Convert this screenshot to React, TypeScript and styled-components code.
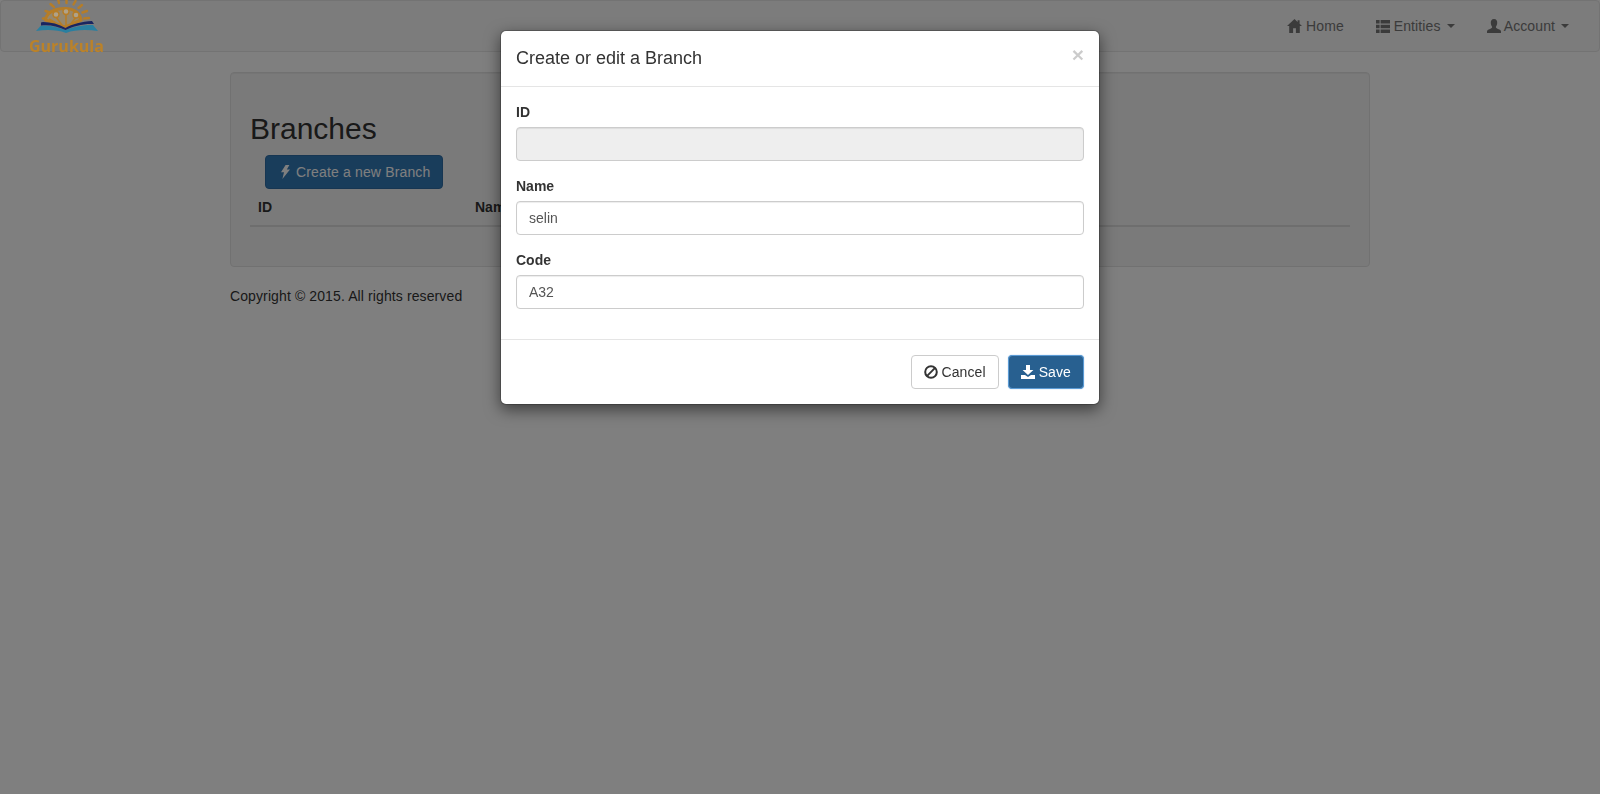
import React from "react";
import styled, { createGlobalStyle } from "styled-components";

const GlobalStyle = createGlobalStyle`
  html, body {
    margin: 0;
    padding: 0;
    height: 100%;
    background: #fff;
    font-family: "Liberation Sans", Arial, sans-serif;
    font-size: 14px;
    line-height: 20px;
    color: #333;
  }
  * { box-sizing: border-box; }
`;

const HomeIcon = () => (
  <svg width="15" height="14" viewBox="0 0 15 14" fill="currentColor">
    <path d="M7.5 0 L10.6 2.9 V1.2 H12.6 V4.7 L15 7 H12.8 V14 H8.9 V9.2 H6.1 V14 H2.2 V7 H0 Z" />
  </svg>
);

const ListIcon = () => (
  <svg width="14" height="13" viewBox="0 0 14 13" fill="currentColor">
    <path d="M0 0 H3.6 V3.6 H0 Z M4.6 0 H14 V3.6 H4.6 Z M0 4.7 H3.6 V8.3 H0 Z M4.6 4.7 H14 V8.3 H4.6 Z M0 9.4 H3.6 V13 H0 Z M4.6 9.4 H14 V13 H4.6 Z" />
  </svg>
);

const UserIcon = () => (
  <svg width="14" height="14" viewBox="0 0 14 14" fill="currentColor">
    <path d="M7 0 C9.4 0 10.4 1.8 10.2 4 C10.1 5.6 9.5 7 8.9 7.8 C8.7 8.9 9.6 9.4 11 9.9 C13 10.6 14 11.2 14 12.4 V14 H0 V12.4 C0 11.2 1 10.6 3 9.9 C4.4 9.4 5.3 8.9 5.1 7.8 C4.5 7 3.9 5.6 3.8 4 C3.6 1.8 4.6 0 7 0 Z" />
  </svg>
);

const BoltIcon = () => (
  <svg width="14" height="14" viewBox="0 0 14 14" fill="currentColor">
    <path d="M7.6 0 H11.4 L8.8 4.6 H12 L4.4 14 L6 7.2 H3 Z" />
  </svg>
);

const BanIcon = () => (
  <svg width="14" height="14" viewBox="0 0 14 14" fill="none" stroke="currentColor" strokeWidth="2">
    <circle cx="7" cy="7" r="5.8" />
    <path d="M2.9 11.1 L11.1 2.9" />
  </svg>
);

const DownloadIcon = () => (
  <svg width="14" height="14" viewBox="0 0 14 14" fill="currentColor">
    <path d="M5 0 H9 V5 H12.4 L7 10 L1.6 5 H5 Z M0 10 H4 L7 12 L10 10 H14 V14 H0 Z" />
  </svg>
);

const LogoMark = () => (
  <svg width="72" height="36" viewBox="0 0 72 36">
    <g stroke="#b57d28" strokeWidth="2.4" strokeLinecap="round">
      <path d="M29 -1 L30 3" />
      <path d="M37.5 -1 L37.5 3" />
      <path d="M46.5 1 L44.5 4.5" />
      <path d="M21.5 4 L25 7" />
      <path d="M53 5 L49.5 8" />
      <path d="M16.5 11 L21 12.5" />
      <path d="M58 11 L53.5 12.5" />
      <path d="M14 18.5 L19 18.5" />
      <path d="M60 18 L55 18.5" />
    </g>
    <path d="M16.5 20 C17 13 25 8.5 36 8.5 C46 8.5 51 14 52 20 L41 25 L36 27 L30 25 Z" fill="#96886e" stroke="#b57d28" strokeWidth="3" />
    <g stroke="#b57d28" strokeWidth="1.6" fill="none">
      <path d="M27 17 L33 25" />
      <path d="M37 14 L37 26" />
      <path d="M47 17 L41 25" />
      <path d="M20 19 L27 23" />
      <path d="M50 20 L44 23" />
    </g>
    <g fill="#b0a288" stroke="#b57d28" strokeWidth="1.4">
      <circle cx="27" cy="14.5" r="3" />
      <circle cx="37" cy="11.5" r="3" />
      <circle cx="47" cy="15" r="3" />
    </g>
    <path d="M7 31 L12 25.5 C20 25 29 27 36.5 30 C44 27 54 24.5 64 25 L69 31 C58 29.5 46 29.5 37 33 C28 29.5 17 29.5 7 31 Z" fill="#2a7fa0" />
    <path d="M12 22.5 L14 22 C22 22 30 24 36.5 28 C43 24 53 21.5 63 21 L65 24 C54 23.5 45 26 36.5 30 C28 26 20 24.5 12 25.5 Z" fill="#1a2560" />
  </svg>
);

export default function App() {
  return (
    <>
      <GlobalStyle />
      <Page>
        <Navbar>
          <Brand>
            <LogoMark />
            <BrandName>Gurukula</BrandName>
          </Brand>
          <NavList>
            <NavLink><HomeIcon /> Home</NavLink>
            <NavLink><ListIcon /> Entities <Caret /></NavLink>
            <NavLink><UserIcon /> Account <Caret /></NavLink>
          </NavList>
        </Navbar>
        <Container>
          <Well>
            <PageTitle>Branches</PageTitle>
            <CreateButton><BoltIcon /> Create a new Branch</CreateButton>
            <Table>
              <thead>
                <tr>
                  <HeadCell $width={217}>ID</HeadCell>
                  <HeadCell $width={300}>Name</HeadCell>
                  <HeadCell $width={300}>Code</HeadCell>
                  <HeadCell />
                </tr>
              </thead>
            </Table>
          </Well>
          <Footer>Copyright © 2015. All rights reserved</Footer>
        </Container>
      </Page>
      <Backdrop />
      <ModalWrap>
        <Modal>
          <ModalHeader>
            <ModalTitle>Create or edit a Branch</ModalTitle>
            <CloseButton>×</CloseButton>
          </ModalHeader>
          <ModalBody>
            <FormGroup>
              <Label>ID</Label>
              <Input disabled defaultValue="" />
            </FormGroup>
            <FormGroup>
              <Label>Name</Label>
              <Input defaultValue="selin" />
            </FormGroup>
            <FormGroup>
              <Label>Code</Label>
              <Input defaultValue="A32" />
            </FormGroup>
          </ModalBody>
          <ModalFooter>
            <CancelButton><BanIcon /> Cancel</CancelButton>
            <SaveButton><DownloadIcon /> Save</SaveButton>
          </ModalFooter>
        </Modal>
      </ModalWrap>
    </>
  );
}

const Page = styled.div`
  min-height: 794px;
`;

const Navbar = styled.nav`
  height: 52px;
  margin-bottom: 20px;
  display: flex;
  justify-content: space-between;
  background: #f8f8f8;
  border: 1px solid #e7e7e7;
  border-radius: 4px;
`;

const Brand = styled.a`
  position: relative;
  z-index: 1050;
  width: 76px;
  margin-left: 28px;
  margin-top: -1px;
  display: flex;
  flex-direction: column;
  align-items: flex-start;

  svg {
    flex-shrink: 0;
  }
`;

const BrandName = styled.span`
  flex-shrink: 0;
  font-family: "Open Sans", sans-serif;
  font-weight: 700;
  font-size: 16px;
  line-height: 19px;
  margin-top: 1px;
  color: #bb8229;
  white-space: nowrap;
`;

const NavList = styled.div`
  display: flex;
  gap: 2px;
  margin-right: 15px;
`;

const NavLink = styled.a`
  display: flex;
  align-items: center;
  padding: 15px;
  line-height: 20px;
  letter-spacing: 0.1px;
  color: #777;
  white-space: pre;
`;

const Caret = styled.span`
  display: inline-block;
  width: 0;
  height: 0;
  margin-left: 2px;
  border-top: 4px solid;
  border-right: 4px solid transparent;
  border-left: 4px solid transparent;
`;

const Container = styled.div`
  width: 1140px;
  margin: 0 auto;
`;

const Well = styled.div`
  padding: 19px;
  margin-bottom: 19px;
  background: #f5f5f5;
  border: 1px solid #e3e3e3;
  border-radius: 4px;
  box-shadow: inset 0 1px 1px rgba(0, 0, 0, 0.05);
`;

const PageTitle = styled.h2`
  margin: 20px 0 10px;
  font-size: 30px;
  font-weight: 500;
  line-height: 33px;
`;

const BaseButton = styled.button`
  display: flex;
  align-items: center;
  height: 34px;
  padding: 6px 12px;
  font-family: inherit;
  font-size: 14px;
  line-height: 20px;
  letter-spacing: 0.1px;
  border: 1px solid transparent;
  border-radius: 4px;
  white-space: pre;
`;

const CreateButton = styled(BaseButton)`
  margin-left: 15px;
  letter-spacing: 0.15px;
  color: #fff;
  background: #337ab7;
  border-color: #2e6da4;
`;

const Table = styled.table`
  width: 100%;
  margin-bottom: 20px;
  border-collapse: collapse;
  table-layout: fixed;
`;

const HeadCell = styled.th<{ $width?: number }>`
  width: ${(p) => (p.$width ? `${p.$width}px` : "auto")};
  padding: 8px;
  height: 37px;
  line-height: 19px;
  text-align: left;
  font-weight: 700;
  border-bottom: 2px solid #ddd;
`;

const Footer = styled.p`
  margin: 0;
  letter-spacing: 0.11px;
  color: #333;
`;

const Backdrop = styled.div`
  position: fixed;
  inset: 0;
  z-index: 1040;
  background: #000;
  opacity: 0.5;
`;

const ModalWrap = styled.div`
  position: fixed;
  inset: 0;
  z-index: 1060;
  padding-top: 30px;
`;

const Modal = styled.div`
  width: 600px;
  margin: 0 auto;
  background: #fff;
  border: 1px solid rgba(0, 0, 0, 0.2);
  border-radius: 6px;
  background-clip: padding-box;
  box-shadow: 0 5px 15px rgba(0, 0, 0, 0.5);
`;

const ModalHeader = styled.div`
  position: relative;
  padding: 15px;
  border-bottom: 1px solid #e5e5e5;
`;

const ModalTitle = styled.h4`
  margin: 0;
  font-size: 18px;
  font-weight: 500;
  line-height: 25px;
`;

const CloseButton = styled.span`
  position: absolute;
  top: 13px;
  right: 15px;
  font-size: 21px;
  font-weight: 700;
  line-height: 21px;
  color: #000;
  opacity: 0.2;
`;

const ModalBody = styled.div`
  padding: 15px;
`;

const FormGroup = styled.div`
  margin-bottom: 15px;
`;

const Label = styled.label`
  display: block;
  margin-bottom: 5px;
  font-weight: 700;
`;

const Input = styled.input`
  display: block;
  width: 100%;
  height: 34px;
  padding: 6px 12px;
  font-family: inherit;
  font-size: 14px;
  color: #555;
  background: #fff;
  border: 1px solid #ccc;
  border-radius: 4px;
  box-shadow: inset 0 1px 1px rgba(0, 0, 0, 0.075);

  &:disabled {
    background: #eee;
  }
`;

const ModalFooter = styled.div`
  display: flex;
  justify-content: flex-end;
  gap: 9px;
  padding: 15px;
  border-top: 1px solid #e5e5e5;
`;

const CancelButton = styled(BaseButton)`
  color: #333;
  background: #fff;
  border-color: #ccc;
`;

const SaveButton = styled(BaseButton)`
  color: #fff;
  background: #286090;
  border-color: #5b9bd5;
  box-shadow: 0 0 1px #5b9bd5;
`;
